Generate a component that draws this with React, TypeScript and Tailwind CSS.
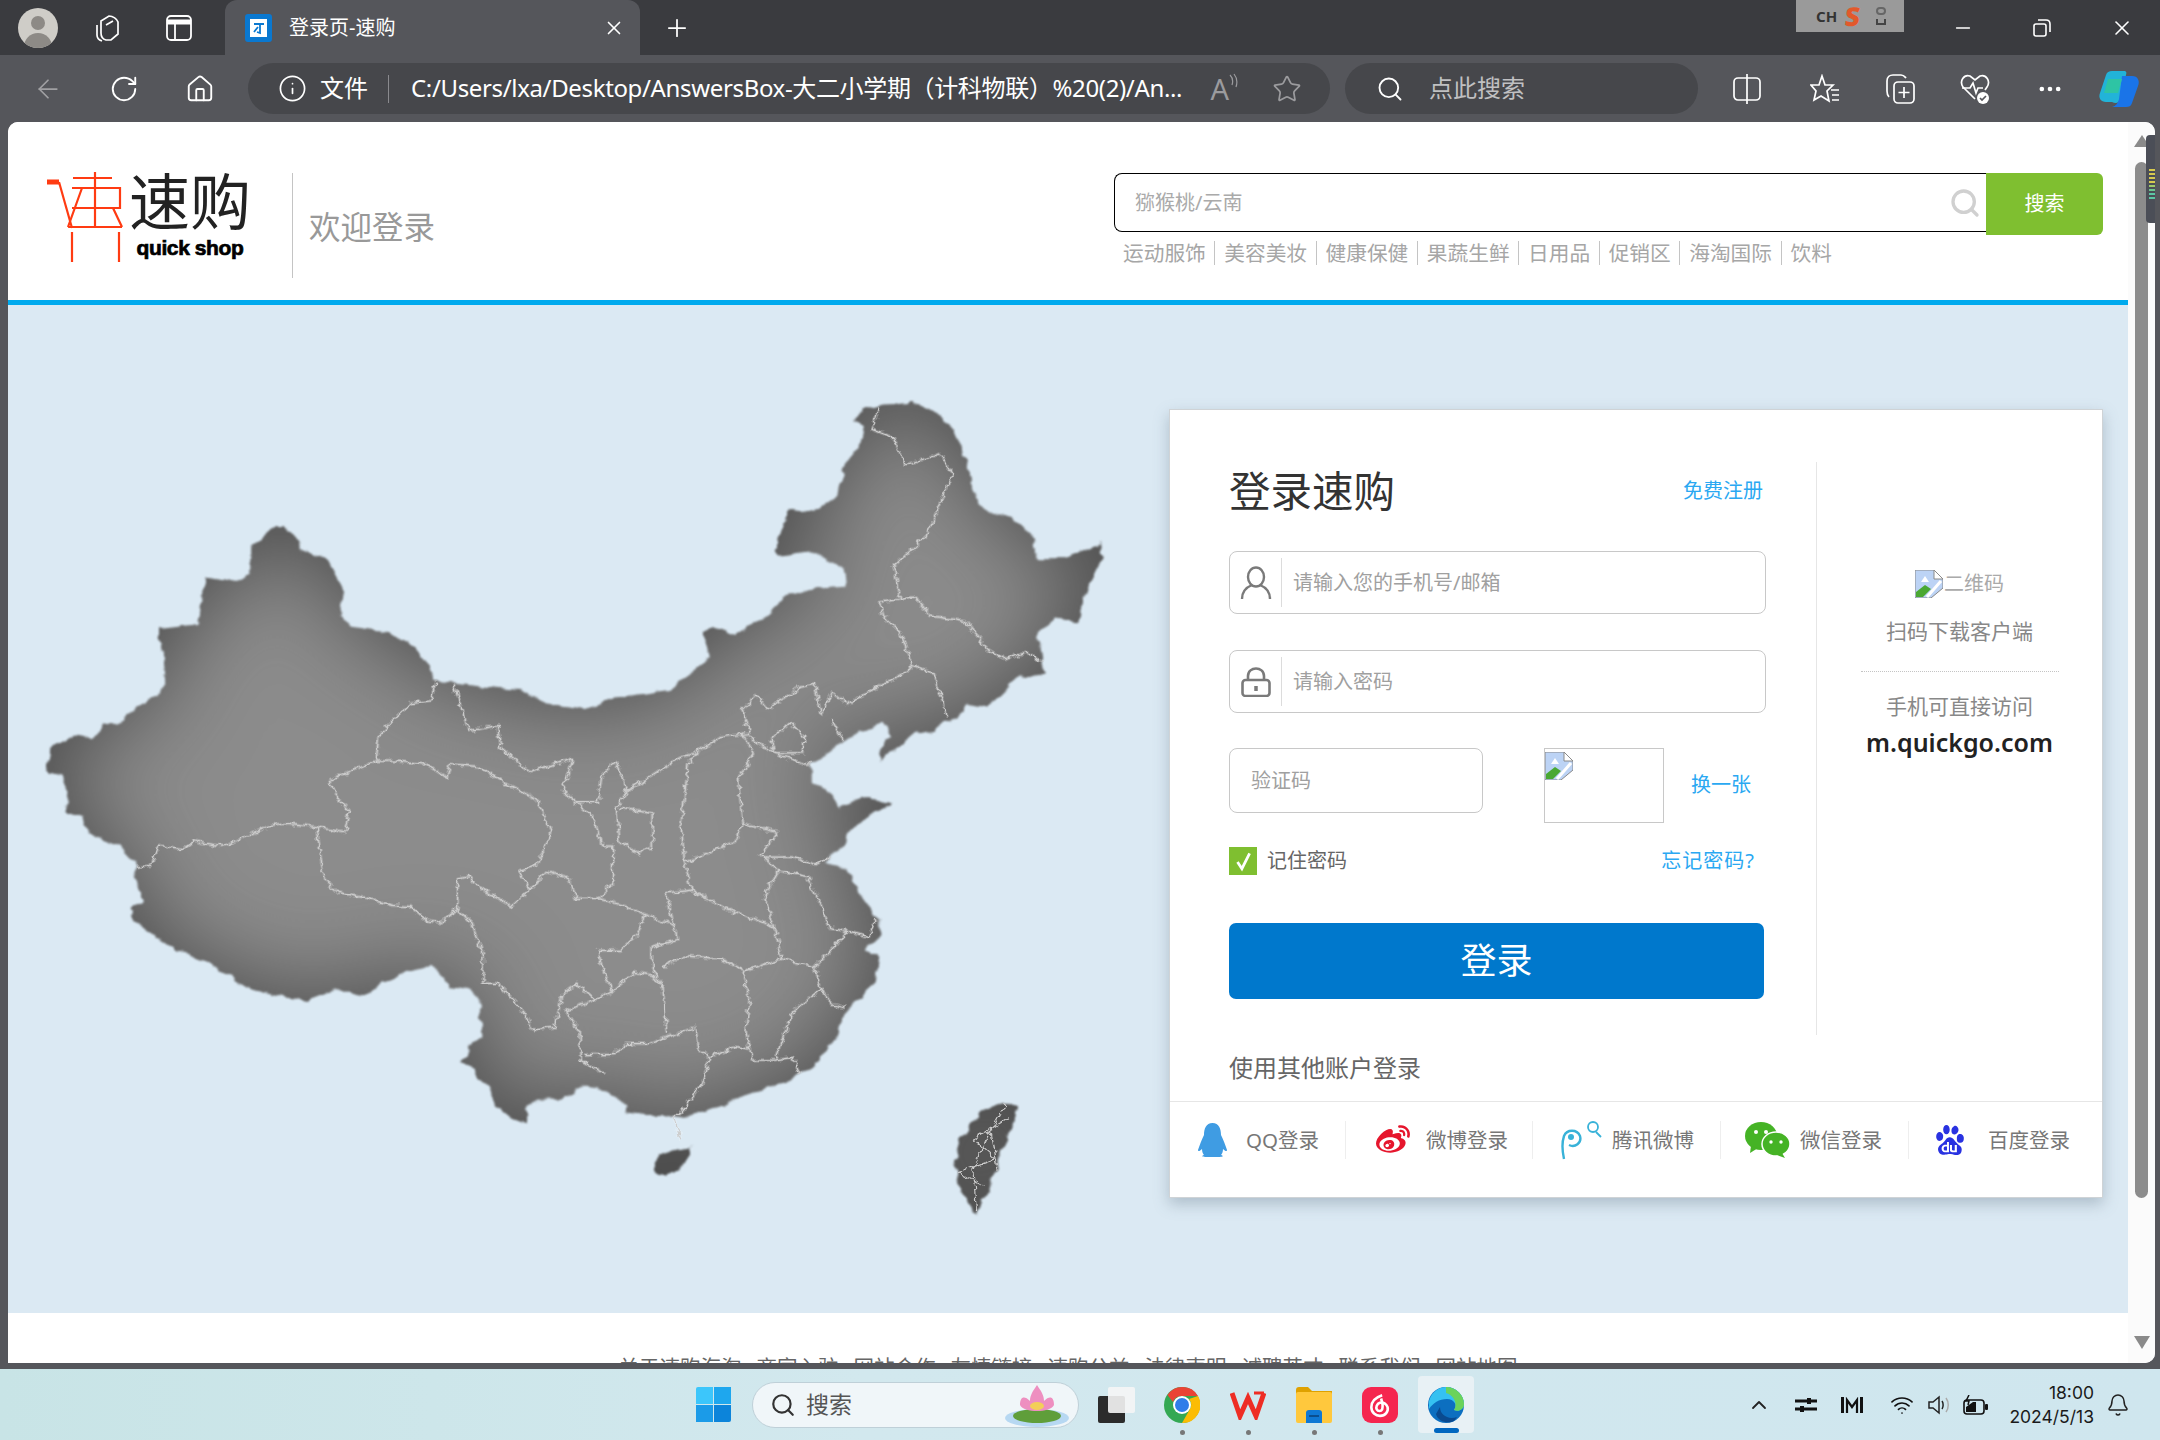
import React from "react";
import {
  ArrowLeft,
  RotateCw,
  Home,
  Info,
  Star,
  Search,
  Plus,
  X,
  Minus,
  Ellipsis,
  Bell,
  ChevronUp,
  Wifi,
} from "lucide-react";
import { FaWeibo } from "react-icons/fa";
import { SiBaidu } from "react-icons/si";

// map outline and borders are traced on a 1568x1568 grid, then stretched onto the hero
const CHINA_OUTLINE =
  "M1185 75 1195 55 1225 45 1265 42 1300 60 1320 85 1335 130 1345 170 1358 225 1375 240 1405 250 1430 280 1440 325 1480 325 1500 310 1528 298 1530 330 1510 370 1495 440 1465 435 1440 460 1447 530 1435 542 1415 540 1395 565 1370 597 1345 590 1320 620 1295 640 1270 645 1235 680 1222 698 1220 680 1235 650 1225 625 1200 640 1175 655 1150 680 1125 700 1125 735 1150 745 1165 780 1195 760 1235 775 1215 790 1185 815 1170 845 1145 880 1175 890 1195 940 1220 985 1220 1015 1200 1040 1220 1050 1215 1100 1190 1130 1170 1160 1160 1200 1130 1250 1100 1275 1060 1295 1030 1305 1010 1320 985 1330 945 1345 930 1340 895 1340 870 1335 860 1310 840 1295 810 1290 780 1310 745 1310 730 1330 730 1355 710 1345 690 1325 680 1295 660 1260 640 1245 650 1220 668 1200 665 1130 650 1110 625 1105 600 1070 560 1080 530 1100 505 1125 470 1110 430 1130 390 1125 345 1110 315 1085 270 1050 245 1040 210 1010 185 985 180 965 200 950 185 910 190 885 165 850 125 830 115 795 90 785 95 755 85 720 65 715 70 670 100 650 130 655 145 630 170 620 190 595 220 575 230 545 225 490 220 455 275 445 285 360 330 370 350 350 350 300 380 265 395 265 420 310 455 330 475 380 470 430 490 450 540 460 580 490 605 550 640 555 720 565 760 590 812 600 850 580 930 565 985 505 975 460 990 450 1020 465 1060 435 1090 395 1140 378 1175 375 1170 345 1130 312 1080 320 1075 310 1095 235 1130 240 1160 215 1175 150 1195 115 1200 90Z";

const PROVINCE_BORDERS = [
  "M605 550 597 585 570 590 545 620 525 650 522 695",
  "M522 695 470 722 457 730 470 765 485 785 478 825 440 815 400 808 370 815 345 830 310 850 285 845 270 840 255 855 220 848 210 885 190 888",
  "M440 815 445 870 450 910 470 935 510 945 545 958 570 960 590 985 610 990 635 965 635 910 650 905 665 925 690 945 710 960 735 930 720 895 745 885 765 825 745 765 700 735 665 705 625 700 620 725 590 700 550 695 522 695",
  "M735 930 760 895 790 910 800 945 830 945 870 960 895 975 935 995 940 1020 905 1035 905 1070 920 1110",
  "M635 965 655 990 670 1050 670 1100 690 1100 720 1140 740 1185 770 1180 780 1120 800 1100 825 1130 850 1115 835 1070 830 1040 860 1040 885 1010 895 975",
  "M850 1115 880 1080 905 1085 920 1110 925 1190",
  "M825 1130 785 1150 805 1190 805 1240 840 1265",
  "M810 1230 850 1230 870 1210 900 1210 965 1180 970 1220 985 1235 975 1280 945 1335 935 1345 945 1385",
  "M920 1070 950 1050 1000 1055 1030 1075 1040 1130 1035 1190 1040 1220 1020 1215 985 1235",
  "M1040 1220 1045 1240 1075 1240 1100 1150 1140 1110 1130 1070 1085 1055 1030 1080",
  "M1075 1240 1100 1235 1110 1265",
  "M1140 1110 1155 1140 1175 1145",
  "M1130 1070 1160 1030 1175 1005 1205 1015 1215 985",
  "M1085 1055 1075 1000 1060 940 1080 895 1120 905 1140 960 1150 1000 1175 1005",
  "M1060 870 1100 870 1130 885 1150 870",
  "M1080 895 1055 865 1080 825 1030 810 1022 840 950 880 960 930 1000 960 1060 990 1075 1000",
  "M935 995 925 935 960 930",
  "M950 880 945 810 955 700 965 680 1000 650 1040 645 1030 600 1050 575 1065 600 1110 560 1130 555 1140 610 1155 570 1175 590 1260 530 1265 520",
  "M1030 645 1045 680 1025 730 1030 810",
  "M1070 655 1095 625 1115 650 1115 680 1075 680Z",
  "M1040 650 1075 680 1115 700 1125 700",
  "M1155 620 1170 655",
  "M1265 520 1295 535 1315 615",
  "M1265 520 1250 460 1225 430 1220 405 1250 400 1270 395 1290 430 1340 440 1370 490 1395 510 1425 495 1445 515",
  "M1250 400 1240 340 1285 285 1300 240 1322 170 1305 135 1255 155 1240 105 1210 90 1220 50",
  "M630 555 650 640 690 630 695 670 735 715 795 690 780 750 800 770 830 770 835 720 855 695 870 750 905 720 940 690 965 680",
  "M800 770 825 800 835 850 850 850 850 915 830 945",
  "M870 750 855 780 860 840 885 865 905 850 905 790 860 780",
];

const CATEGORIES = ["运动服饰", "美容美妆", "健康保健", "果蔬生鲜", "日用品", "促销区", "海淘国际", "饮料"];
const FOOTER_LINKS = ["关于速购海淘", "商家入驻", "网站合作", "友情链接", "速购公益", "法律声明", "诚聘英才", "联系我们", "网站地图"];

const ChinaMap = () => (
  <svg
    viewBox="11 0 1557 1568"
    preserveAspectRatio="none"
    className="mt-[75px] h-[860px] w-[1122px] shrink-0"
  >
    <defs>
      <filter id="mapGlow" x="-10%" y="-10%" width="120%" height="120%" colorInterpolationFilters="sRGB">
        <feTurbulence type="fractalNoise" baseFrequency="0.05" numOctaves="2" seed="4" result="noise" />
        <feDisplacementMap in="SourceGraphic" in2="noise" scale="14" xChannelSelector="R" yChannelSelector="G" result="shape" />
        <feColorMatrix in="shape" type="matrix" values="0 0 0 0 0 0 0 0 0 0 0 0 0 0 0 0 0 0 -1 1" result="inv" />
        <feGaussianBlur in="inv" stdDeviation="65 85" result="blurred" />
        <feFlood floodColor="#4a4a4a" />
        <feComposite in2="blurred" operator="in" result="shadow" />
        <feComposite in="shadow" in2="shape" operator="in" result="inner" />
        <feMerge result="merged">
          <feMergeNode in="shape" />
          <feMergeNode in="inner" />
        </feMerge>
        <feGaussianBlur in="merged" stdDeviation="1.600 2.200" />
      </filter>
      <filter id="mapVeins" x="-10%" y="-10%" width="120%" height="120%" colorInterpolationFilters="sRGB">
        <feTurbulence type="fractalNoise" baseFrequency="0.09" numOctaves="2" seed="9" result="noise" />
        <feDisplacementMap in="SourceGraphic" in2="noise" scale="12" xChannelSelector="R" yChannelSelector="G" />
        <feGaussianBlur stdDeviation="0.800 1" />
      </filter>
    </defs>
    <g filter="url(#mapGlow)">
      <path d={CHINA_OUTLINE} fill="#8c8c8c" />
      <path d="M1360 1335 1395 1318 1410 1325 1405 1360 1390 1400 1380 1450 1355 1520 1335 1480 1325 1425 1335 1380Z" fill="#808080" />
      <path d="M958 1400C955 1425 940 1450 920 1452C905 1450 903 1430 915 1415C925 1405 945 1402 958 1400Z" fill="#666" />
    </g>
    <g filter="url(#mapVeins)">
      <g fill="none" stroke="#fff" strokeOpacity="0.2" strokeWidth="3.500" strokeLinejoin="round">
        {PROVINCE_BORDERS.map((d) => (
          <path key={d} d={d} vectorEffect="non-scaling-stroke" />
        ))}
      </g>
      <g fill="none" stroke="#cccccc" strokeWidth="1.200" strokeLinejoin="round">
        {PROVINCE_BORDERS.map((d) => (
          <path key={d} d={d} vectorEffect="non-scaling-stroke" />
        ))}
        <path
          d="M1395 1320 1370 1380 1350 1440 1355 1515M1400 1345 1350 1385 1380 1420 1330 1445 1365 1470M1375 1370 1385 1440"
          vectorEffect="non-scaling-stroke"
        />
      </g>
    </g>
  </svg>
);

const BrokenImage = () => (
  <svg viewBox="0 0 28 28" className="h-[28px] w-[28px] shrink-0">
    <path d="M0 0H19L28 9V18L16 28H0Z" fill="#bcd3f5" stroke="#8a8a8a" />
    <path d="M19 0V9H28Z" fill="#fff" stroke="#8a8a8a" />
    <path d="M10 6 14 12H6Z" fill="#fff" />
    <path d="M1 27V22L10 15 16 19 8 27Z" fill="#4aa832" />
    <path d="M12 27 26 11" stroke="#fff" strokeWidth="3" />
  </svg>
);

const UserIcon = () => (
  <svg viewBox="0 0 32 34" className="h-[34px] w-[32px]" fill="none" stroke="#7a7a7a" strokeWidth="2.400">
    <ellipse cx="16" cy="11" rx="8" ry="9.500" />
    <path d="M2 33C2 25 7 21 12 19M30 33C30 25 25 21 20 19" />
  </svg>
);

const LockIcon = () => (
  <svg viewBox="0 0 30 30" className="h-[30px] w-[30px]" fill="none" stroke="#7a7a7a" strokeWidth="2.600">
    <path d="M7 13V9C7 4 11 1.500 15 1.500S23 4 23 9V13" />
    <rect x="1.500" y="13" width="27" height="16" rx="3" />
    <path d="M15 19V24" strokeWidth="3.500" />
  </svg>
);

const QqIcon = () => (
  <svg viewBox="0 0 31 34" className="h-[34px] w-[31px]" fill="#3f9ce3">
    <path d="M15.500 0C9 0 7 6 7 12C5 16 3 21 1 27C1 29 3 28 5 26C5 29 6 31 7 32C4 33 5 34 10 34H21C26 34 27 33 24 32C25 31 26 29 26 26C28 28 30 29 30 27C28 21 26 16 24 12C24 6 22 0 15.500 0Z" />
  </svg>
);

const TencentWeiboIcon = () => (
  <svg viewBox="0 0 42 40" className="h-[40px] w-[42px]" fill="none" stroke="#38b2d8" strokeWidth="2.400">
    <path d="M4 39C2 30 2 22 4 16C7 9 17 9 20 16C22 23 15 28 9 25" />
    <circle cx="11" cy="17" r="3" fill="#38b2d8" stroke="none" />
    <circle cx="33" cy="7" r="5" strokeWidth="1.800" />
    <path d="M36 12 41 17" strokeWidth="1.800" />
  </svg>
);

const WechatIcon = () => (
  <svg viewBox="0 0 45 36" className="h-[36px] w-[45px]">
    <ellipse cx="16" cy="14" rx="16" ry="14" fill="#45b325" />
    <path d="M6 24 5 31 13 26Z" fill="#45b325" />
    <ellipse cx="31" cy="22" rx="14" ry="12" fill="#45b325" stroke="#fff" strokeWidth="1.500" />
    <path d="M37 31 40 36 32 33Z" fill="#45b325" />
    <circle cx="11" cy="10" r="2" fill="#fff" />
    <circle cx="21" cy="10" r="2" fill="#fff" />
    <circle cx="26" cy="20" r="1.700" fill="#fff" />
    <circle cx="36" cy="20" r="1.700" fill="#fff" />
  </svg>
);

const SOCIALS = [
  { label: "QQ登录", icon: <QqIcon />, box: "w-[176px] pl-[27px] gap-[18px]" },
  { label: "微博登录", icon: <FaWeibo className="h-[34px] w-[42px] text-[#e6162d]" />, box: "w-[187px] pl-[26px] gap-[12px]" },
  { label: "腾讯微博", icon: <TencentWeiboIcon />, box: "w-[188px] pl-[27px] gap-[10px]" },
  { label: "微信登录", icon: <WechatIcon />, box: "w-[188px] pl-[24px] gap-[10px]" },
  { label: "百度登录", icon: <SiBaidu className="h-[34px] w-[30px] text-[#2932e1]" />, box: "flex-1 pl-[26px] gap-[23px]" },
];

const LoginCard = () => (
  <div className="ml-[39px] mt-[104px] flex h-[789px] w-[934px] shrink-0 flex-col border border-[#cfd3d6] bg-white shadow-[0_6px_14px_rgba(90,110,125,0.35)]">
    <div className="mt-[52px] flex h-[573px]">
      <div className="w-[646px] pl-[59px]">
        <div className="flex h-[58px] w-[534px] items-center justify-between">
          <h1 className="text-[41.500px] text-[#333]">登录速购</h1>
          <a className="text-[20px] text-[#2aa8f2]">免费注册</a>
        </div>
        <label className="mt-[31px] flex h-[63px] w-[537px] items-center rounded-[8px] border border-[#c8c8c8] py-[6px]">
          <span className="flex h-full w-[52px] items-center justify-center border-r border-[#dcdcdc]">
            <UserIcon />
          </span>
          <input placeholder="请输入您的手机号/邮箱" className="ml-[11px] flex-1 text-[20px] outline-none placeholder:text-[#a0a0a0]" />
        </label>
        <label className="mt-[36px] flex h-[63px] w-[537px] items-center rounded-[8px] border border-[#c8c8c8] py-[6px]">
          <span className="flex h-full w-[52px] items-center justify-center border-r border-[#dcdcdc]">
            <LockIcon />
          </span>
          <input placeholder="请输入密码" className="ml-[11px] flex-1 text-[20px] outline-none placeholder:text-[#a0a0a0]" />
        </label>
        <div className="mt-[35px] flex items-start">
          <input placeholder="验证码" className="h-[65px] w-[254px] rounded-[8px] border border-[#c8c8c8] px-[21px] text-[20px] outline-none placeholder:text-[#a0a0a0]" />
          <div className="ml-[61px] h-[75px] w-[120px] border border-[#c8c8c8]">
            <div className="mt-[3px]">
              <BrokenImage />
            </div>
          </div>
          <a className="ml-[27px] mt-[22px] text-[20px] text-[#2aa8f2]">换一张</a>
        </div>
        <div className="mt-[24px] flex h-[28px] w-[526px] items-center">
          <span className="flex h-[28px] w-[28px] items-center justify-center bg-[#7fbf30]">
            <svg viewBox="0 0 20 20" className="h-[22px] w-[22px]" fill="none" stroke="#fff" strokeWidth="2.500">
              <path d="M5 11 9 17 16 3" />
            </svg>
          </span>
          <span className="ml-[10px] text-[20px] text-[#666]">记住密码</span>
          <a className="ml-auto text-[20px] tracking-[1px] text-[#2aa8f2]">忘记密码?</a>
        </div>
        <button className="mt-[48px] h-[76px] w-[535px] rounded-[7px] bg-[#0078cc] text-[36px] text-white">登录</button>
      </div>
      <div className="flex flex-1 flex-col items-center border-l border-[#e6e6e6] pt-[108px]">
        <div className="flex h-[28px] items-center">
          <BrokenImage />
          <span className="ml-[1px] text-[20px] text-[#aaa]">二维码</span>
        </div>
        <p className="mt-[20px] text-[21px] leading-[26px] text-[#888]">扫码下载客户端</p>
        <div className="mt-[27px] w-[198px] border-t border-dotted border-[#c4c4c4]" />
        <p className="mt-[19px] text-[21px] leading-[30px] text-[#888]">手机可直接访问</p>
        <p className="mt-[3px] text-[25px] font-semibold leading-[36px] text-[#222]">m.quickgo.com</p>
      </div>
    </div>
    <p className="ml-[59px] mt-[16px] text-[24px] leading-[34px] text-[#666]">使用其他账户登录</p>
    <div className="mt-[16px] flex flex-1 border-t border-[#e6e6e6] pt-[19px]">
      {SOCIALS.map((item, i) => (
        <div key={item.label} className={`flex h-[38px] items-center ${item.box} ${i < 4 ? "border-r border-[#eeeeee]" : ""}`}>
          {item.icon}
          <span className="whitespace-nowrap text-[20.500px] text-[#777]">{item.label}</span>
        </div>
      ))}
    </div>
  </div>
);

const LogoMark = () => (
  <svg viewBox="0 0 80 96" className="h-[96px] w-[80px] shrink-0" fill="none" stroke="#ff3b12" strokeWidth="2.200">
    <path d="M1 10H13" strokeWidth="5" />
    <path d="M13 10 26 56" />
    <path d="M27 6H66M49 0V56M26 16H74V36H26M36 16 22 55M67 36 76 55M22 55H76" />
    <path d="M26 60V90M73 60V90" />
  </svg>
);

const PageHeader = () => (
  <header className="flex h-[178px] items-start bg-white">
    <div className="ml-[38px] mt-[50px] flex shrink-0">
      <LogoMark />
      <div className="ml-[3px] flex w-[122px] flex-col items-center">
        <span className="text-[61px] leading-[60px] text-[#222]">速购</span>
        <span className="mt-[6px] [font-family:'Liberation_Sans',sans-serif] text-[21px] font-bold leading-[20px] tracking-[-0.4px] text-black [-webkit-text-stroke:0.7px_#000]">
          quick shop
        </span>
      </div>
    </div>
    <div className="ml-[41px] mt-[51px] h-[105px] border-l border-[#c4c4c4]" />
    <span className="ml-[16px] mt-[83px] text-[31.500px] leading-[44px] text-[#999]">欢迎登录</span>
    <div className="ml-[679px] mt-[51px] w-[989px]">
      <div className="flex h-[62px] items-start">
        <div className="flex h-[59px] flex-1 items-center rounded-l-[8px] border-[1.500px] border-r-0 border-black pl-[20px] pr-[5px]">
          <input placeholder="猕猴桃/云南" className="flex-1 text-[20px] outline-none placeholder:text-[#aaa]" />
          <Search className="h-[32px] w-[32px] text-[#d0d0d0]" strokeWidth={2.500} />
        </div>
        <button className="h-[62px] w-[117px] rounded-r-[6px] bg-[#7fbf30] text-[20px] text-white">搜索</button>
      </div>
      <nav className="ml-[9px] mt-[4px] flex h-[28px] items-center">
        {CATEGORIES.map((name, i) => (
          <a
            key={name}
            className={`text-[20.700px] leading-[24px] text-[#a6a6a6] ${i > 0 ? "ml-[9px]" : ""} ${i < CATEGORIES.length - 1 ? "border-r border-[#c4c4c4] pr-[8.500px]" : ""}`}
          >
            {name}
          </a>
        ))}
      </nav>
    </div>
  </header>
);

const PageFooter = () => (
  <footer className="flex h-[50px] justify-center gap-[15px] bg-white pt-[40px] text-[20.500px] leading-[28px] text-[#666]">
    {FOOTER_LINKS.map((name) => (
      <a key={name} className="whitespace-nowrap">
        {name}
      </a>
    ))}
  </footer>
);

const Scrollbar = () => (
  <div className="relative flex w-[27px] shrink-0 flex-col items-center bg-[#fbfbfb] pb-[14px] pt-[13px]">
    <div className="h-0 w-0 border-x-[8px] border-b-[12px] border-x-transparent border-b-[#8a8a8a]" />
    <div className="mt-[15px] h-[1036px] w-[13px] rounded-full bg-[#8c8c8c]" />
    <div className="mt-auto h-0 w-0 border-x-[8px] border-t-[13px] border-x-transparent border-t-[#8a8a8a]" />
    {/* the little meter that sits on top of the scrollbar */}
    <div className="absolute left-[18px] top-[13px] flex h-[88px] w-[14px] flex-col gap-[2px] rounded-l-[4px] bg-[#4b4e57] px-[3px] pt-[34px]">
      <div className="h-[2px] bg-[#d6c94f]" />
      <div className="h-[2px] bg-[#d6c94f]" />
      <div className="h-[2px] bg-[#d6c94f]" />
      <div className="h-[2px] bg-[#d6c94f]" />
      <div className="h-[2px] bg-[#9fc96a]" />
      <div className="h-[2px] bg-[#6cc48e]" />
      <div className="h-[2px] bg-[#5cc6a4]" />
      <div className="h-[2px] bg-[#5cc6a4]" />
    </div>
  </div>
);

const TitleBar = () => (
  <div className="flex h-[55px] items-center bg-[#3a3b3f] text-white">
    <div className="relative ml-[18px] h-[40px] w-[40px] overflow-hidden rounded-full bg-[#cfcdc8]">
      <div className="mx-auto mt-[8px] h-[14px] w-[14px] rounded-full bg-[#8d8a86]" />
      <div className="mx-auto mt-[3px] h-[20px] w-[28px] rounded-t-full bg-[#8d8a86]" />
    </div>
    <svg viewBox="0 0 30 30" className="ml-[34px] h-[30px] w-[30px]" fill="none" stroke="#fff" strokeWidth="1.700">
      <path d="M9 8 17 3C21 3 25 6 26 9V21L19 27H14C10 26 9 23 9 20ZM5 12V22C5 25 7 27 10 28" />
      <path d="M14 12 21 8" />
    </svg>
    <svg viewBox="0 0 26 26" className="ml-[44px] h-[26px] w-[26px]" fill="none" stroke="#fff" strokeWidth="1.800">
      <rect x="1" y="1" width="24" height="24" rx="4" />
      <path d="M1 7H25" strokeWidth="5" />
      <path d="M9 8V25" />
    </svg>
    <div className="ml-[33px] flex h-[55px] w-[415px] items-center self-end rounded-t-[12px] bg-[#55565b] pl-[20px]">
      <div className="flex h-[28px] w-[27px] items-center justify-center rounded-[3px] bg-[#0a78d0]">
        <div className="flex h-[18px] w-[17px] items-center justify-center bg-white">
          <svg viewBox="0 0 14 14" className="h-[14px] w-[14px]" fill="none" stroke="#0a78d0" strokeWidth="1.800">
            <path d="M2 3H12M8 3V12L5 11M6 6 2 11" />
          </svg>
        </div>
      </div>
      <span className="ml-[17px] text-[20px] text-white">登录页-速购</span>
      <X className="ml-auto mr-[15px] h-[22px] w-[22px]" strokeWidth={1.800} />
    </div>
    <Plus className="ml-[23px] h-[28px] w-[28px]" strokeWidth={1.500} />
    <div className="ml-[1105px] flex h-[32px] w-[108px] items-center self-start bg-[#9a9a9a] pl-[20px]">
      <span className="text-[15px] font-bold leading-none text-[#333]">CH</span>
      <span className="ml-[8px] -skew-x-6 text-[26px] font-black leading-[26px] text-[#e2592b]">S</span>
      <div className="ml-[16px] flex flex-col gap-[4px]">
        <div className="h-[8px] w-[10px] rounded-full border-2 border-[#666]" />
        <div className="h-[6px] w-[10px] border-x-2 border-b-2 border-[#444]" />
      </div>
    </div>
    <Minus className="ml-[48px] h-[22px] w-[22px]" strokeWidth={1.600} />
    <svg viewBox="0 0 20 20" className="ml-[58px] h-[20px] w-[20px]" fill="none" stroke="#fff" strokeWidth="1.600">
      <rect x="2" y="6" width="12" height="12" rx="2" />
      <path d="M6 2H14C16.500 2 18 3.500 18 6V14" />
    </svg>
    <X className="ml-[58px] h-[24px] w-[24px]" strokeWidth={1.600} />
  </div>
);

const Toolbar = () => (
  <div className="flex h-[67px] items-center bg-[#55565b] text-white">
    <ArrowLeft className="ml-[33px] h-[30px] w-[30px] text-[#a0a0a3]" strokeWidth={1.400} />
    <RotateCw className="ml-[46px] h-[30px] w-[30px]" strokeWidth={1.500} />
    <Home className="ml-[46px] h-[30px] w-[30px]" strokeWidth={1.500} />
    <div className="ml-[33px] flex h-[51px] w-[1082px] items-center rounded-full bg-[#46474b] leading-[32px]">
      <Info className="ml-[30px] h-[29px] w-[29px]" strokeWidth={1.400} />
      <span className="ml-[13px] mb-[2px] text-[24px]">文件</span>
      <span className="ml-[20px] h-[28px] border-l border-[#8a8a8e]" />
      <span className="ml-[22px] mb-[2px] whitespace-nowrap text-[24px] tracking-[-0.35px]">
        C:/Users/lxa/Desktop/AnswersBox-大二小学期（计科物联）%20(2)/An...
      </span>
      <span className="ml-auto text-[29px] leading-none text-[#9b9b9e]">A</span>
      <svg viewBox="0 0 10 20" className="mb-[12px] h-[20px] w-[10px]" fill="none" stroke="#9b9b9e" strokeWidth="1.200">
        <path d="M1 2C4 5 4 9 3 12M5 1C9 6 8 11 7 14" />
      </svg>
      <Star className="ml-[33px] mr-[28px] h-[30px] w-[30px] text-[#9b9b9e]" strokeWidth={1.400} />
    </div>
    <div className="ml-[15px] flex h-[51px] w-[353px] items-center rounded-full bg-[#46474b]">
      <Search className="ml-[31px] h-[28px] w-[28px]" strokeWidth={1.600} />
      <span className="ml-[25px] mb-[2px] text-[24px] text-[#c0c0c2]">点此搜索</span>
    </div>
    <svg viewBox="0 0 28 30" className="ml-[35px] h-[30px] w-[28px]" fill="none" stroke="#fff" strokeWidth="1.700">
      <rect x="1" y="4" width="26" height="22" rx="4" />
      <path d="M14 0V30" />
    </svg>
    <svg viewBox="0 0 30 30" className="ml-[49px] h-[30px] w-[30px]" fill="none" stroke="#fff" strokeWidth="1.700">
      <path d="M12 2 15 11H23L17 17 19 27 11 22 4 26 6 17 1 11H9Z" />
      <path d="M21 16H29M22 21H29M22 26H29" />
    </svg>
    <svg viewBox="0 0 30 32" className="ml-[45px] h-[32px] w-[30px]" fill="none" stroke="#fff" strokeWidth="1.700">
      <rect x="9" y="9" width="20" height="21" rx="4" />
      <path d="M19 14V25M13.500 19.500H24.500M4 24C2 22 2 20 2 18V8C2 4 5 2 8 2H16C19 2 20 4 21 5" />
    </svg>
    <svg viewBox="0 0 30 32" className="ml-[45px] h-[32px] w-[30px]" fill="none" stroke="#fff" strokeWidth="1.700">
      <path d="M15 26 3 14C-1 8 4 1 10 3L15 7 20 3C26 1 31 8 27 14L25 17" />
      <path d="M2 15H10L13 10 16 20 18 15H23" />
      <circle cx="23" cy="25" r="6" fill="#fff" stroke="none" />
      <path d="M20 25 22 27 26 23" stroke="#55565b" />
    </svg>
    <Ellipsis className="ml-[46px] h-[28px] w-[28px]" strokeWidth={2} />
    <svg viewBox="0 0 42 40" className="ml-[34px] h-[40px] w-[42px]">
      <path d="M14 2H26C28 2 29 3 28 6L22 30C21 34 18 35 14 33H8C3 33 0 29 2 24L8 6C9 3 11 2 14 2Z" fill="#22b3d8" />
      <path d="M24 7H34C40 7 42 12 40 17L34 34C33 37 31 38 28 38H14C18 37 20 34 21 30Z" fill="#1a74e8" />
      <path d="M10 10H24L20 24H6Z" fill="#2ec4a4" />
    </svg>
  </div>
);

const StartIcon = () => (
  <div className="grid h-[35px] w-[35px] grid-cols-2 gap-[1px]">
    <div className="rounded-tl-[2px] bg-[#3cc6fb]" />
    <div className="bg-[#1ea7ee]" />
    <div className="bg-[#1b9be8]" />
    <div className="rounded-br-[2px] bg-[#0c84da]" />
  </div>
);

const Lotus = () => (
  <svg viewBox="0 0 66 44" className="h-[44px] w-[66px]">
    <ellipse cx="33" cy="35" rx="32" ry="9" fill="#b7d8f2" />
    <ellipse cx="33" cy="33" rx="24" ry="7" fill="#5f9e3a" />
    <path d="M33 2C37 8 40 12 40 18 46 12 50 14 50 22 46 30 20 30 16 22 16 14 20 12 26 18 26 12 29 8 33 2Z" fill="#ee8fc0" />
    <ellipse cx="33" cy="23" rx="7" ry="4" fill="#f3cf59" />
  </svg>
);

const ChromeIcon = () => (
  <svg viewBox="0 0 36 36" className="h-[36px] w-[36px]">
    <circle cx="18" cy="18" r="18" fill="#34a853" />
    <path d="M18 0A18 18 0 0 1 34 9H18A9 9 0 0 0 9 15L3.500 8A18 18 0 0 1 18 0Z" fill="#ea4335" />
    <path d="M34 9A18 18 0 0 1 18 36L26 22A9 9 0 0 0 25 12Z" fill="#fbbc04" />
    <circle cx="18" cy="18" r="9" fill="#fff" />
    <circle cx="18" cy="18" r="7" fill="#2f7de9" />
  </svg>
);

const WpsIcon = () => (
  <svg viewBox="0 0 36 30" className="h-[30px] w-[36px]" fill="none" stroke="#ee2d24" strokeWidth="5">
    <path d="M2 3 10 26 18 8 26 26 34 3" />
    <path d="M24 3H34" strokeWidth="3" />
  </svg>
);

const FolderIcon = () => (
  <svg viewBox="0 0 36 36" className="h-[36px] w-[36px]">
    <path d="M0 3C0 1 1 0 3 0H12L16 4H36V9H0Z" fill="#dfa100" />
    <rect x="0" y="5" width="36" height="31" rx="2" fill="#ffc83d" />
    <path d="M10 36V26C10 24 11 23 13 23H23C25 23 26 24 26 26V36Z" fill="#0f78d4" />
    <rect x="13" y="28" width="10" height="2" fill="#0a4e8f" />
  </svg>
);

const NeteaseIcon = () => (
  <div className="flex h-[36px] w-[36px] items-center justify-center rounded-[9px] bg-[#f5264f]">
    <svg viewBox="0 0 24 24" className="h-[26px] w-[26px]" fill="none" stroke="#fff" strokeWidth="2.400">
      <path d="M14 3C8 5 4 9 4 14C4 19 8 22 12 22C17 22 20 18 19 14C18 11 15 9 12 10C9 11 8 14 9 16C10 18 13 18 14 16C15 13 14 9 13 6" />
    </svg>
  </div>
);

const EdgeIcon = () => (
  <svg viewBox="0 0 36 36" className="h-[36px] w-[36px]">
    <circle cx="18" cy="18" r="18" fill="#0c6fc0" />
    <path d="M1 14C4 4 12 0 18 0C28 0 36 8 36 17C36 23 30 25 26 23C30 18 26 12 19 12C11 12 5 16 1 22Z" fill="#35c1f1" />
    <path d="M18 0C28 0 36 8 36 17C36 23 30 25 26 23C30 17 26 8 18 6Z" fill="#6bd35a" />
    <path d="M12 20C12 28 20 33 29 30L26 34C20 37 10 35 8 27Z" fill="#0a4a8f" />
  </svg>
);

const Taskbar = () => (
  <div className="flex h-[71px] items-center bg-[linear-gradient(90deg,#c8e4e6,#d2e8ee_40%,#cfe6ee)]">
    <div className="ml-[696px]">
      <StartIcon />
    </div>
    <div className="ml-[21px] flex h-[46px] w-[327px] items-center rounded-full border border-[#bfd0d8] bg-[#f0f6f9]">
      <Search className="ml-[17px] h-[26px] w-[26px] text-[#333]" strokeWidth={2} />
      <span className="ml-[10px] text-[23px] text-[#555]">搜索</span>
      <div className="ml-auto mr-[8px]">
        <Lotus />
      </div>
    </div>
    <div className="relative ml-[19px] h-[36px] w-[37px]">
      <div className="absolute bottom-0 left-0 h-[27px] w-[27px] rounded-[2px] bg-[#2b2b2b]" />
      <div className="absolute right-0 top-0 h-[26px] w-[27px] rounded-[2px] bg-[#f5f5f5]/90" />
    </div>
    {[<ChromeIcon />, <WpsIcon />, <FolderIcon />, <NeteaseIcon />].map((icon, i) => (
      <div key={i} className={`relative flex h-[57px] w-[56px] items-center justify-center ${i === 0 ? "ml-[19px]" : "ml-[10px]"}`}>
        {icon}
        <span className="absolute bottom-[-2px] h-[5px] w-[5px] rounded-full bg-[#777]" />
      </div>
    ))}
    <div className="relative ml-[10px] flex h-[57px] w-[56px] items-center justify-center rounded-[4px] bg-[#e8f1f5]">
      <EdgeIcon />
      <span className="absolute bottom-0 h-[5px] w-[25px] rounded-full bg-[#0067c0]" />
    </div>
    <ChevronUp className="ml-[273px] h-[24px] w-[24px] text-[#222]" strokeWidth={1.800} />
    <svg viewBox="0 0 22 18" className="ml-[24px] h-[18px] w-[22px]" fill="none" stroke="#111" strokeWidth="3">
      <path d="M0 5H22M0 13H22" />
      <path d="M14 2V8M7 10V16" strokeWidth="4" />
    </svg>
    <svg viewBox="0 0 22 16" className="ml-[24px] h-[16px] w-[22px]" fill="none" stroke="#111" strokeWidth="3">
      <path d="M1.500 0V16M20.500 0V16" />
      <path d="M6 16V3L11 10 16 3V16" strokeWidth="2.200" />
    </svg>
    <Wifi className="ml-[27px] h-[24px] w-[24px] text-[#111]" strokeWidth={1.700} />
    <svg viewBox="0 0 24 20" className="ml-[14px] h-[20px] w-[24px]" fill="none" stroke="#222" strokeWidth="1.500">
      <path d="M1 7H5L11 2V18L5 13H1Z" />
      <path d="M14 6C15.500 8 15.500 12 14 14" />
      <path d="M18 3C21 7 21 13 18 17" stroke="#aaa" />
    </svg>
    <svg viewBox="0 0 26 20" className="ml-[11px] h-[20px] w-[26px]">
      <rect x="1" y="5" width="20" height="14" rx="3" fill="none" stroke="#111" strokeWidth="1.600" />
      <path d="M3 17V12L10 7H13V17Z" fill="#111" />
      <path d="M6 0 3 6H6L5 10" fill="none" stroke="#111" strokeWidth="1.500" />
      <rect x="22" y="9" width="3" height="6" rx="1" fill="#111" />
    </svg>
    <div className="ml-[10px] flex w-[95px] flex-col items-end text-[17.500px] leading-[24px] text-[#1a1a1a] [font-family:'Inter',sans-serif]">
      <span>18:00</span>
      <span>2024/5/13</span>
    </div>
    <Bell className="ml-[12px] h-[24px] w-[24px] text-[#222]" strokeWidth={1.500} />
  </div>
);

export default function App() {
  return (
    <div className="flex h-[1440px] w-[2160px] flex-col overflow-hidden bg-[#55565b] [font-family:'Noto_Sans','Noto_Sans_CJK_SC',sans-serif]">
      <TitleBar />
      <Toolbar />
      <div className="ml-[8px] mr-[5px] flex h-[1241px] overflow-hidden rounded-t-[10px] rounded-br-[10px] bg-white">
        <main className="w-[2120px] shrink-0 overflow-hidden">
          <PageHeader />
          <div className="box-content flex h-[1008px] items-start border-t-[5px] border-[#00aaee] bg-[#dbe9f3]">
            <ChinaMap />
            <LoginCard />
          </div>
          <PageFooter />
        </main>
        <Scrollbar />
      </div>
      <div className="h-[6px] shrink-0" />
      <Taskbar />
    </div>
  );
}
